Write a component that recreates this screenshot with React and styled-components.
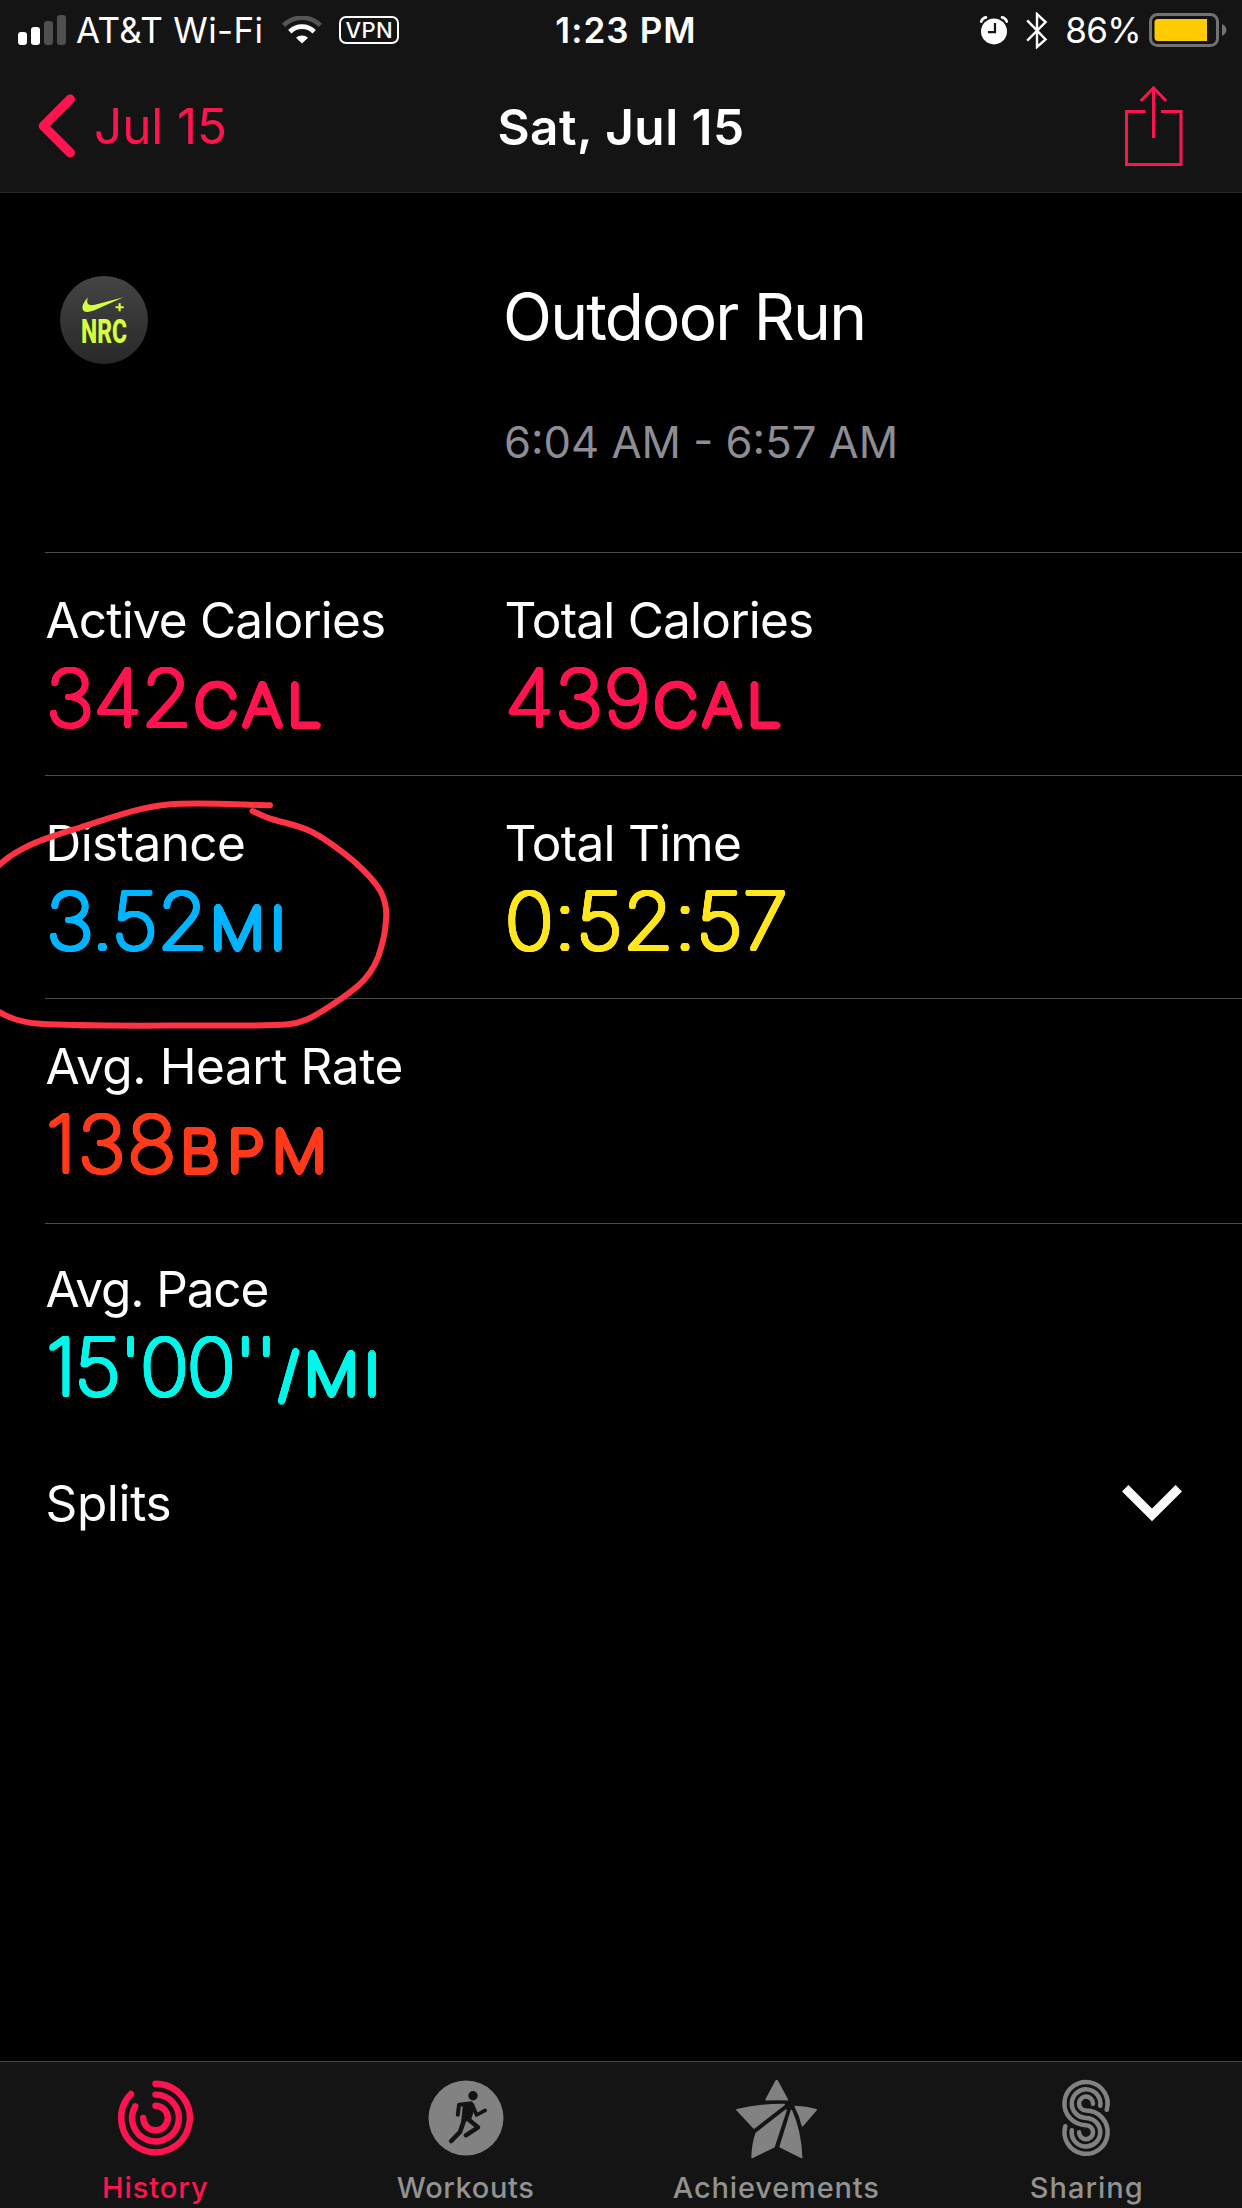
import React from "react";
import styled, { createGlobalStyle, css } from "styled-components";

const PINK = "#ff1450";
const BAR = "#141414";

const GlobalStyle = createGlobalStyle`
  * { box-sizing: border-box; }
  body {
    margin: 0;
    background: #000;
    color: #fff;
    font-family: Inter, Roboto, "Liberation Sans", sans-serif;
  }
  svg { display: block; flex: none; }
`;

/* Grows thin letter shapes by a round pen, which gives rounded stroke ends. */
const roundPen = (radius) => {
  const dots = [];
  [radius, radius / 2].forEach((r) => {
    for (let i = 0; i < 16; i += 1) {
      const a = (i / 16) * Math.PI * 2;
      dots.push(`${(Math.cos(a) * r).toFixed(2)}px ${(Math.sin(a) * r).toFixed(2)}px 0 currentColor`);
    }
  });
  return css`text-shadow: ${dots.join(", ")};`;
};

const Screen = styled.div`
  width: 1242px;
  height: 2208px;
  display: flex;
  flex-direction: column;
  overflow: hidden;
  background: #000;
`;

const Header = styled.header`
  height: 193px;
  background: ${BAR};
  border-bottom: 1px solid #2a2a2a;
`;

const StatusBar = styled.div`
  height: 60px;
  display: grid;
  grid-template-columns: 1fr auto 1fr;
  align-items: center;
  padding: 0 15px 0 18px;
`;

const StatusGroup = styled.div`
  display: flex;
  align-items: center;
  justify-content: ${(p) => (p.$end ? "flex-end" : "flex-start")};
`;

const StatusText = styled.span`
  font-size: 35px;
  line-height: 60px;
  letter-spacing: ${(p) => p.$spacing || 0}px;
  font-weight: ${(p) => (p.$strong ? 600 : 400)};
  margin: ${(p) => p.$margin || 0};
  white-space: nowrap;
`;

const IconSlot = styled.span`
  margin-left: 18px;
`;

const VpnBadge = styled.span`
  width: 60px;
  height: 28px;
  margin-left: 17px;
  border: 2px solid #fff;
  border-radius: 7px;
  font-size: 22px;
  font-weight: 500;
  line-height: 24px;
  letter-spacing: 0.4px;
  text-align: center;
`;

const NavBar = styled.nav`
  height: 132px;
  display: grid;
  grid-template-columns: 1fr auto 1fr;
  align-items: center;
  padding: 0 59px 0 36px;
`;

const BackButton = styled.button`
  display: flex;
  align-items: center;
  gap: 17px;
  padding: 0;
  border: 0;
  background: none;
  color: ${PINK};
  font: 400 49.5px/60px Inter, sans-serif;
  letter-spacing: -0.1px;
`;

const NavTitle = styled.h1`
  margin: 2px 0 0 23px;
  font-size: 49.5px;
  line-height: 60px;
  font-weight: 600;
  letter-spacing: 0.49px;
`;

const ShareButton = styled.button`
  justify-self: end;
  padding: 0;
  border: 0;
  background: none;
`;

const Main = styled.main`
  flex: 1;
`;

const Hero = styled.section`
  height: 359px;
  display: grid;
  grid-template-columns: 443px 1fr;
  padding: 83px 0 0 60px;
`;

const HeroTitle = styled.h2`
  margin: 1px 0 0;
  font-size: 64px;
  line-height: 80px;
  font-weight: 400;
  letter-spacing: -1.8px;
`;

const HeroTime = styled.p`
  margin: 56px 0 0 1px;
  font-size: 43.6px;
  line-height: 60px;
  color: #8e8d94;
`;

const StatRow = styled.section`
  height: ${(p) => p.$height || 223}px;
  margin-left: 45px;
  border-top: 1px solid #4c4c4c;
  padding-top: ${(p) => p.$top || 37}px;
  display: grid;
  grid-template-columns: 459px 1fr;
`;

const Stat = styled.div`
  padding-left: 0.5px;
`;

const Label = styled.div`
  font-size: 49.5px;
  line-height: 60px;
  letter-spacing: ${(p) => p.$spacing}px;
  white-space: nowrap;
`;

const Value = styled.div`
  margin-top: 6px;
  font-size: 77.6px;
  line-height: 84px;
  font-weight: 100;
  letter-spacing: ${(p) => p.$spacing}px;
  color: ${(p) => p.$color};
  white-space: nowrap;
  transform: scaleX(1.06);
  transform-origin: left center;
  ${roundPen(2.3)}
`;

const Unit = styled.span`
  margin-left: ${(p) => p.$shift}px;
  font-size: 57.8px;
  letter-spacing: ${(p) => p.$spacing}px;
  ${roundPen(2.9)}
`;

const SplitsRow = styled.section`
  height: 118px;
  display: flex;
  align-items: center;
  justify-content: space-between;
  padding: 0 60px 0 45.5px;
`;

const TabBar = styled.nav`
  height: 147px;
  display: grid;
  grid-template-columns: repeat(4, 1fr);
  background: ${BAR};
  border-top: 1px solid #4a4a4a;
`;

const Tab = styled.div`
  display: flex;
  flex-direction: column;
  align-items: center;
  padding-top: 12px;
  color: ${(p) => (p.$active ? PINK : "#828282")};
`;

const TabLabel = styled.span`
  margin-top: 8px;
  font-size: 29px;
  line-height: 36px;
  font-weight: 500;
  letter-spacing: ${(p) => p.$spacing}px;
  color: ${(p) => (p.$active ? PINK : "#929292")};
`;

const Markup = styled.svg`
  position: absolute;
  left: 0;
  top: 780px;
  pointer-events: none;
`;

const SignalIcon = () => (
  <svg width="48" height="30" viewBox="0 0 48 30" fill="#fff">
    <rect x="0" y="17" width="9" height="13" rx="3" />
    <rect x="13" y="12" width="9" height="18" rx="3" />
    <g fill="#4f4f4f">
      <rect x="26" y="6" width="9" height="24" rx="3" />
      <rect x="39" y="0" width="9" height="30" rx="3" />
    </g>
  </svg>
);

const WifiIcon = () => (
  <svg width="40" height="28" viewBox="0 0 40 28" fill="none">
    <path d="M1.6 9.4A26 26 0 0 1 38.4 9.4" stroke="#555" strokeWidth="4.6" />
    <path d="M7.8 15.7A17.4 17.4 0 0 1 32.2 15.7" stroke="#fff" strokeWidth="4.8" />
    <path d="M14 21.8A8.7 8.7 0 0 1 26 21.8L20 27.6Z" fill="#fff" />
  </svg>
);

const AlarmIcon = () => (
  <svg width="28" height="29" viewBox="0 0 28 29">
    <circle cx="14" cy="15.4" r="13" fill="#fff" />
    <path d="M1.2 5.6Q2.4 2.1 6 1.4M26.8 5.6Q25.6 2.1 22 1.4" fill="none" stroke="#fff" strokeWidth="2.6" strokeLinecap="round" />
    <path d="M15 7V16.2H8" fill="none" stroke={BAR} strokeWidth="2.2" />
  </svg>
);

const BluetoothIcon = () => (
  <svg width="22" height="37" viewBox="0 0 22 37" fill="none" stroke="#fff" strokeWidth="2.4">
    <path d="M1.2 8.4L19.6 27.4L11 35V2L19.6 10L1.2 28.6" />
  </svg>
);

const BatteryIcon = () => (
  <svg width="78" height="34" viewBox="0 0 78 34">
    <rect x="1.5" y="1.5" width="67" height="31" rx="7" fill="none" stroke="#737373" strokeWidth="3" />
    <path d="M9 6H58V28H9Q5.5 28 5.5 24.5V9.5Q5.5 6 9 6Z" fill="#ffcc00" />
    <path d="M73 11Q77.4 13.5 77.4 17T73 23Z" fill="#737373" />
  </svg>
);

const BackIcon = () => (
  <svg width="41" height="64" viewBox="0 0 41 64" fill="none" stroke={PINK} strokeWidth="9.4" strokeLinecap="round" strokeLinejoin="round">
    <path d="M34.3 5.2L7.4 32L34.3 58.8" />
  </svg>
);

const ShareIcon = () => (
  <svg width="60" height="82" viewBox="0 0 60 82" fill="none" stroke={PINK} strokeWidth="3">
    <path d="M22.5 26.5H3.5V79.5H58V26.5H38" />
    <path d="M30.5 53V3M17.8 16L30.5 2.8L43.2 16" />
  </svg>
);

const RunClubLogo = () => (
  <svg width="88" height="88" viewBox="0 0 88 88">
    <defs>
      <linearGradient id="disc" x1="0" y1="0" x2="0" y2="1">
        <stop offset="0" stopColor="#444" />
        <stop offset="1" stopColor="#282828" />
      </linearGradient>
    </defs>
    <circle cx="44" cy="44" r="44" fill="url(#disc)" />
    <g fill="#d5ff3f">
      <path d="M28 21.5C24 25.5 21.5 30 22.8 33.5C24.5 37.3 30 36 35 34L63.5 21.2L35 28.7C29 30.3 25.5 28 28 21.5Z" />
      <path d="M58.5 27.3H60.7V30.3H63.7V32.3H60.7V35.3H58.5V32.3H55.5V30.3H58.5Z" />
      <text x="21" y="67" fontFamily="Roboto, sans-serif" fontWeight="800" fontSize="33" textLength="46" lengthAdjust="spacingAndGlyphs">
        NRC
      </text>
    </g>
  </svg>
);

const ChevronDown = () => (
  <svg width="60" height="37" viewBox="0 0 60 37" fill="none" stroke="#fff" strokeWidth="9">
    <path d="M3.2 3.2L30 30L56.8 3.2" />
  </svg>
);

const RingsIcon = () => (
  <svg width="88" height="88" viewBox="-44.5 -44 88 88" fill="none" stroke="currentColor" strokeWidth="6.4" strokeLinecap="round">
    <path d="M0 -34.3A34.3 34.3 0 1 1 -24.5 -24" />
    <path d="M0 -23.4A23.4 23.4 0 1 1 -20.3 -11.7" />
    <path d="M0 -12.3A12.3 12.3 0 1 1 -12.3 0" />
  </svg>
);

const RunnerIcon = () => (
  <svg width="88" height="88" viewBox="-44 -44 88 88">
    <circle r="37.5" fill="currentColor" />
    <g fill="none" stroke={BAR} strokeWidth="4" strokeLinecap="round" strokeLinejoin="round">
      <circle cx="7" cy="-22.3" r="4.7" fill={BAR} stroke="none" />
      <path d="M-8.2 -3.3L-7 -13.2L4 -14.6" />
      <path d="M6.5 -13L10.6 -3L19.2 -7.6" strokeWidth="3.6" />
      <path d="M-1.5 -13.5L5.5 -15L7.5 -10.5L3.8 0.5L-3.2 2.5Z" fill={BAR} strokeWidth="3" />
      <path d="M-1.5 1L-6 14L-14.8 23" strokeWidth="4.6" />
      <path d="M2.5 1.5L12 9.3L-0.2 17.3" strokeWidth="4.4" />
    </g>
  </svg>
);

const StarIcon = () => (
  <svg width="88" height="88" viewBox="-44.7 -44 88 88" fill="currentColor" stroke="currentColor" strokeWidth="1.6" strokeLinejoin="round">
    <path d="M-0.5 -37.2L0.5 -37.2L10.7 -18.2Q0 -18.9 -10.7 -18.2Z" />
    <path d="M-39.8 -8.2Q-17 -13.6 7.5 -13.4L-22.8 10Z" />
    <path d="M9.3 -7.8L-2.7 28.7L-24.6 39.5Q-24.2 26 -20.5 15.3Z" />
    <path d="M14.7 -7.5Q24 13 24.9 39.5L3.5 28.7Z" />
    <path d="M18.6 -11.4Q30 -10.8 39.5 -8.2L25.7 7.7Q23.8 -2 18.6 -11.4Z" />
  </svg>
);

const SharingIcon = () => (
  <svg width="88" height="88" viewBox="-43 -44 88 88" fill="none" stroke="currentColor" strokeWidth="4.5" strokeLinecap="round">
    <path d="M20.7 -8.2A21.6 21.6 0 1 0 0 7.2A7 7 0 0 1 0 21.2A7 7 0 0 1 -6.9 14.2" />
    <path d="M14.2 -12.2A14.3 14.3 0 1 0 0 -0.1A14.3 14.3 0 1 1 -14.2 12.2" />
    <path d="M7 -14.2A7 7 0 1 0 0 -7.4A21.6 21.6 0 1 1 -20.7 8.2" />
  </svg>
);

const STATS = [
  {
    items: [
      { label: "Active Calories", ls: -0.83, value: "342", vs: -0.7, unit: "CAL", us: 4.85, shift: 2.2, color: "#ff1450" },
      { label: "Total Calories", ls: -0.79, value: "439", vs: 1.05, unit: "CAL", us: 4.85, shift: 2, color: "#ff1450" },
    ],
  },
  {
    items: [
      { label: "Distance", ls: -0.58, value: "3.52", vs: -0.7, unit: "MI", us: 4.9, shift: 2.4, color: "#00b4ff" },
      { label: "Total Time", ls: -0.75, value: "0:52:57", vs: 0.15, color: "#ffe620" },
    ],
  },
  {
    height: 225,
    items: [{ label: "Avg. Heart Rate", ls: -0.41, value: "138", vs: 1.45, unit: "BPM", us: 7.25, shift: 2.3, color: "#ff3a1a" }],
  },
  {
    height: 221,
    top: 35,
    items: [{ label: "Avg. Pace", ls: -1.11, value: "15'00''", vs: -1.57, unit: "/MI", us: 5.2, shift: 2.7, color: "#00f7ea" }],
  },
];

const TABS = [
  { name: "History", Icon: RingsIcon, spacing: 0.95, active: true },
  { name: "Workouts", Icon: RunnerIcon, spacing: 0.65 },
  { name: "Achievements", Icon: StarIcon, spacing: 0.84 },
  { name: "Sharing", Icon: SharingIcon, spacing: 1 },
];

export default function App() {
  return (
    <Screen>
      <GlobalStyle />
      <Header>
        <StatusBar>
          <StatusGroup>
            <SignalIcon />
            <StatusText $spacing={0.35} $margin="0 19px 0 10px">AT&amp;T Wi-Fi</StatusText>
            <WifiIcon />
            <VpnBadge>VPN</VpnBadge>
          </StatusGroup>
          <StatusText $strong $spacing={1.1} $margin="0 0 0 7px">1:23 PM</StatusText>
          <StatusGroup $end>
            <AlarmIcon />
            <IconSlot><BluetoothIcon /></IconSlot>
            <StatusText $spacing={-0.68} $margin="0 8px 0 17px">86%</StatusText>
            <BatteryIcon />
          </StatusGroup>
        </StatusBar>
        <NavBar>
          <BackButton>
            <BackIcon />
            Jul 15
          </BackButton>
          <NavTitle>Sat, Jul 15</NavTitle>
          <ShareButton aria-label="Share"><ShareIcon /></ShareButton>
        </NavBar>
      </Header>
      <Main>
        <Hero>
          <RunClubLogo />
          <div>
            <HeroTitle>Outdoor Run</HeroTitle>
            <HeroTime>6:04 AM - 6:57 AM</HeroTime>
          </div>
        </Hero>
        {STATS.map((row) => (
          <StatRow key={row.items[0].label} $height={row.height} $top={row.top}>
            {row.items.map((s) => (
              <Stat key={s.label}>
                <Label $spacing={s.ls}>{s.label}</Label>
                <Value $color={s.color} $spacing={s.vs}>
                  {s.value}
                  {s.unit && <Unit $spacing={s.us} $shift={s.shift}>{s.unit}</Unit>}
                </Value>
              </Stat>
            ))}
          </StatRow>
        ))}
        <SplitsRow>
          <Label $spacing={-0.35}>Splits</Label>
          <ChevronDown />
        </SplitsRow>
      </Main>
      <TabBar>
        {TABS.map(({ name, Icon, spacing, active }) => (
          <Tab key={name} $active={active}>
            <Icon />
            <TabLabel $active={active} $spacing={spacing}>{name}</TabLabel>
          </Tab>
        ))}
      </TabBar>
      <Markup width="420" height="270" viewBox="0 0 420 270" fill="none" stroke="#ff3344" strokeWidth="6" strokeLinecap="round">
        <path d="M270 25.3C235 24.5 195 22 168 24.5C140 27 110 38 80 47.5C50 57 20 65 -3 87" />
        <path d="M252.5 31C260 34.5 266 37.5 273 39.5C285 43 297 45 310 51C325 58 340 70 353 80.5C366 92 376 103 381 112C386 122 387 130 386 140C385.5 150 384 158 381 168C378 180 373 190 364 200C352 213 336 222 324 230C312 237.5 302 243 288 244.3C270 246 240 245.500 200 245.500C150 245.500 80 246.500 40 243.800C20 242.500 8 238 -4 230" />
      </Markup>
    </Screen>
  );
}
